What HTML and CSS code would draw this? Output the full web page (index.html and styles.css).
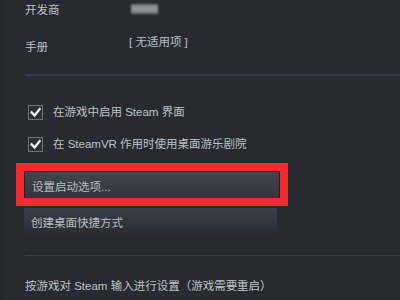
FILE: index.html
```html
<!DOCTYPE html>
<html>
<head>
<meta charset="utf-8">
<link rel="stylesheet" href="styles.css">
</head>
<body>
<div class="page">
  <div class="content">
    <div class="info info-first">
      <span class="label">开发商</span>
      <span class="blurred"></span>
    </div>
    <div class="info info-second">
      <span class="label label-low">手册</span>
      <span class="value">[ 无适用项 ]</span>
    </div>
    <div class="rule rule-thick"></div>
    <div class="check check-first">
      <span class="box"><svg width="15" height="15" viewBox="0 0 15 15"><path d="M3.6 7.2 L6.6 10.4 L11.6 4.2" fill="none" stroke="#ececec" stroke-width="2.4" stroke-linecap="square"/></svg></span>
      <span class="check-text">在游戏中启用 Steam 界面</span>
    </div>
    <div class="check check-second">
      <span class="box"><svg width="15" height="15" viewBox="0 0 15 15"><path d="M3.6 7.2 L6.6 10.4 L11.6 4.2" fill="none" stroke="#ececec" stroke-width="2.4" stroke-linecap="square"/></svg></span>
      <span class="check-text">在 SteamVR 作用时使用桌面游乐剧院</span>
    </div>
    <div class="btn btn-launch">设置启动选项...</div>
    <div class="btn btn-shortcut">创建桌面快捷方式</div>
    <div class="rule rule-thin"></div>
    <div class="input-line">按游戏对 Steam 输入进行设置（游戏需要重启）</div>
  </div>
  <div class="highlight"></div>
</div>
</body>
</html>
```
FILE: styles.css
```css
html, body {
  margin: 0;
  padding: 0;
  background: #272a31;
}
.page {
  position: relative;
  width: 400px;
  height: 300px;
  overflow: hidden;
  box-sizing: border-box;
  border-left: 6px solid #212429;
  font-family: "Liberation Sans", "Noto Sans CJK SC", sans-serif;
  font-size: 11.5px;
  color: #bfc3c7;
}
.content {
  display: flex;
  flex-direction: column;
  padding-left: 19px;
}
.info {
  display: grid;
  grid-template-columns: 104px 1fr;
  align-items: start;
  height: 20px;
  line-height: 20px;
}
.info-second {
  margin-top: 12px;
}
.label-low {
  margin-top: 5px;
}
.blurred {
  display: block;
  width: 27px;
  height: 10px;
  margin-top: 4px;
  margin-left: 2px;
  background: linear-gradient(180deg, #6e7176, #9a9da1 50%, #6e7176);
  filter: blur(1.2px);
}
.value {
  color: #b3c1cb;
}
.rule {
  margin-right: 0;
}
.rule-thick {
  margin-top: 22px;
  height: 2px;
  background: #363a42;
  border-bottom: 1px solid #2d3037;
}
.check {
  display: flex;
  align-items: center;
  height: 15px;
}
.check-first {
  margin-top: 28px;
}
.check-second {
  margin-top: 17px;
}
.box {
  display: block;
  width: 15px;
  height: 15px;
  box-sizing: border-box;
  margin-left: 3px;
  border: 1px solid #6f7277;
  background: #2b2e34;
  position: relative;
}
.box svg {
  position: absolute;
  left: -1px;
  top: -1px;
}
.check-text {
  margin-left: 10px;
  line-height: 15px;
}
.btn {
  margin-left: -1px;
  box-sizing: border-box;
  padding-left: 7px;
  display: flex;
  align-items: center;
  color: #b9bdc2;
}
.btn-launch {
  margin-top: 19px;
  width: 256px;
  height: 28px;
  padding-top: 2px;
  border: 1px solid #2a1d20;
  background: linear-gradient(180deg, #40454e, #32363e);
}
.btn-shortcut {
  margin-top: 9px;
  width: 253px;
  height: 25px;
  padding-top: 3px;
  background: linear-gradient(180deg, #3b4048, #2c3037 85%, #2a2d34);
}
.rule-thin {
  margin-top: 22px;
  height: 1px;
  background: #3a3e45;
}
.input-line {
  margin-top: 20px;
  line-height: 20px;
}
.highlight {
  position: absolute;
  left: 10px;
  top: 163px;
  width: 272px;
  height: 43px;
  box-sizing: border-box;
  border: 8px solid #ee2b2e;
}
```
